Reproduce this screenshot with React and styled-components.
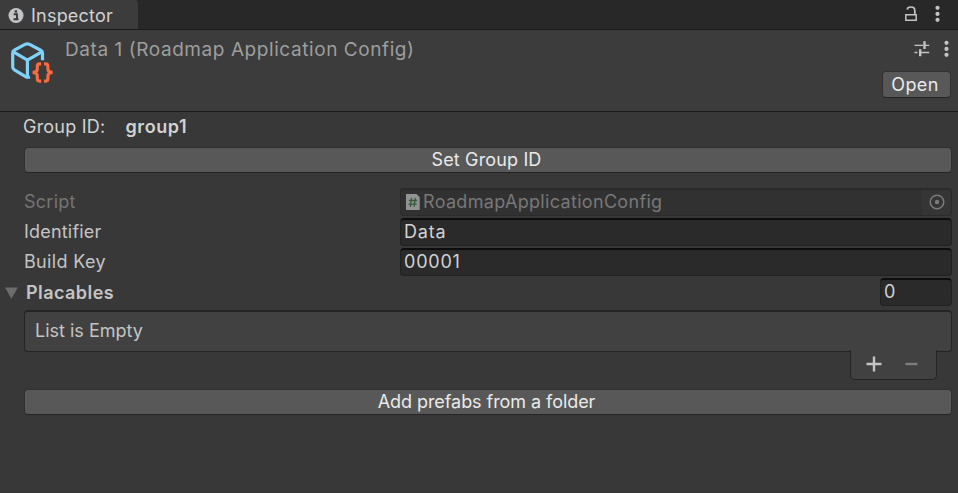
import React from "react";
import styled, { createGlobalStyle } from "styled-components";

const GlobalStyle = createGlobalStyle`
  * { box-sizing: border-box; }
  body { margin: 0; background: #383838; }
  button, input { font: inherit; margin: 0; }
`;

const Window = styled.div`
  width: 958px;
  height: 493px;
  overflow: hidden;
  display: flex;
  flex-direction: column;
  background: #383838;
  color: #c4c4c4;
  font: 400 18px/24px Inter, sans-serif;
  border-bottom: 1px solid #323232;
`;

const Text = styled.span`
  white-space: pre;
  letter-spacing: ${(p) => p.$track || 0}px;
  font-weight: ${(p) => (p.$bold ? 600 : 400)};
`;

const TabBar = styled.header`
  height: 30px;
  flex: none;
  display: flex;
  justify-content: space-between;
  background: #282828;
  border-bottom: 1px solid #1a1a1a;
`;

const Tab = styled.div`
  width: 138px;
  display: flex;
  align-items: center;
  gap: 7px;
  padding: 3px 0 0 8px;
  background: #3c3c3c;
  border-top-right-radius: 3px;
  color: #d2d2d2;
`;

const TabActions = styled.div`
  display: flex;
  align-items: flex-start;
  gap: 17px;
  padding: 5px 18px 0 0;
`;

const AssetHeader = styled.section`
  height: 82px;
  flex: none;
  display: flex;
  background: #3c3c3c;
  border-bottom: 1px solid #1a1a1a;
`;

const AssetIcon = styled.svg`
  flex: none;
  width: 46px;
  height: 46px;
  margin: 9px 0 0 9px;
`;

const AssetTitle = styled.div`
  flex: 1;
  padding: 8px 0 0 10px;
  color: #9e9e9e;
  font-size: 19px;
`;

const AssetTools = styled.div`
  display: flex;
  flex-direction: column;
  align-items: flex-end;
  padding-right: 7px;
`;

const AssetActions = styled.div`
  height: 41px;
  display: flex;
  gap: 14px;
  padding: 10px 2px 0 0;
`;

const Button = styled.button`
  width: ${(p) => (p.$small ? "69px" : "auto")};
  height: ${(p) => (p.$small ? "27px" : "26px")};
  margin-left: ${(p) => (p.$small ? 0 : "1px")};
  flex: none;
  display: flex;
  justify-content: center;
  align-items: center;
  padding: 0 3px 0 0;
  background: #585858;
  border: 1px solid #303030;
  border-bottom-color: #242424;
  border-radius: 4px;
  color: #eaeaea;
`;

const Body = styled.main`
  flex: 1;
  display: flex;
  flex-direction: column;
  padding: 3px 6px 0 23px;
`;

const GroupRow = styled.div`
  height: 32px;
  flex: none;
  display: flex;
  gap: 20px;
  color: #d2d2d2;
`;

const Fields = styled.div`
  display: grid;
  grid-template-columns: 377px 1fr;
  grid-auto-rows: 28px;
  row-gap: 2px;
  margin-top: 15px;
  align-items: center;
`;

const Label = styled.label`
  padding-left: 1px;
  color: ${(p) => (p.$disabled ? "#747474" : "#c4c4c4")};
`;

const Field = styled.div`
  width: ${(p) => p.$width || "auto"};
  height: 28px;
  flex: none;
  display: flex;
  align-items: center;
  padding: 0 0 1px 3px;
  background: #2a2a2a;
  border: 1px solid #212121;
  border-top: 2px solid #0d0d0d;
  border-radius: 4px;
  color: #d2d2d2;
`;

const ObjectField = styled(Field)`
  padding: 0 0 1px 5px;
  gap: 3px;
  background: #313131;
  border: 1px solid #2b2b2b;
  border-top: 2px solid #2b2b2b;
  color: #787878;
  overflow: hidden;
`;

const Picker = styled.span`
  width: 29px;
  height: 25px;
  margin-left: auto;
  display: flex;
  flex: none;
  align-items: center;
  justify-content: center;
  background: #353535;
`;

const ListHeader = styled.div`
  height: 28px;
  flex: none;
  display: flex;
  align-items: center;
  margin: 2px 0 0 -18px;
`;

const Foldout = styled.span`
  flex: 1;
  display: flex;
  align-items: center;
  gap: 8px;
  padding-top: 2px;
`;

const ListBox = styled.div`
  height: 42px;
  flex: none;
  display: flex;
  align-items: center;
  margin: 4px 0 0 1px;
  padding: 0 0 2px 10px;
  background: #414141;
  border: 1px solid #242424;
  border-top-width: 2px;
  border-radius: 4px;
`;

const ListFooter = styled.div`
  width: 87px;
  height: 30px;
  flex: none;
  align-self: flex-end;
  display: flex;
  justify-content: space-between;
  z-index: 1;
  margin: -2px 15px 9px 0;
  padding: 6px 18px 0 15px;
  background: #414141;
  border: 1px solid #242424;
  border-top: 0;
  border-radius: 0 0 5px 5px;
`;

const Icon = styled.svg`
  display: block;
  flex: none;
`;

const InfoIcon = () => (
  <Icon width="16" height="16" viewBox="0 0 16 16">
    <circle cx="8" cy="7.5" r="7.5" fill="#c4c4c4" />
    <path d="M5.7 6.3H9v4.8M5.5 11.3h5" stroke="#383838" strokeWidth="1.9" fill="none" />
    <path d="M6.7 2.3h2.4v2.3H6.7z" fill="#383838" />
  </Icon>
);

const LockIcon = () => (
  <Icon width="14" height="17" viewBox="0 0 14 17">
    <path d="M1.8 9.7h10.4v5.6H1.8z" stroke="#c4c4c4" strokeWidth="1.5" fill="none" />
    <path d="M3.3 4.6C3.3 2.8 4.9 2 7 2c2.7 0 3.8 1.3 3.8 3.5v4" stroke="#c4c4c4" strokeWidth="1.7" fill="none" />
  </Icon>
);

const DotsIcon = () => (
  <Icon width="5" height="18" viewBox="0 0 5 18">
    <circle cx="2.5" cy="2.8" r="2.1" fill="#c4c4c4" />
    <circle cx="2.5" cy="8.9" r="2.1" fill="#c4c4c4" />
    <circle cx="2.5" cy="14.8" r="2.1" fill="#c4c4c4" />
  </Icon>
);

const PresetIcon = () => (
  <Icon width="16" height="17" viewBox="0 0 16 17">
    <path d="M.5 5.4h8.7M11 5.4h4.2M.5 12.5h2.8M5.5 12.5h9.7" stroke="#c4c4c4" strokeWidth="1.4" />
    <path d="M10.5 1.3v7.6M6.2 9.2v7" stroke="#c4c4c4" strokeWidth="2.4" />
  </Icon>
);

const ConfigIcon = () => (
  <AssetIcon viewBox="0 0 46 46" fill="none">
    <g stroke="#7fd3fb" strokeWidth="3.2" strokeLinejoin="round">
      <path d="M33.5 21.3V14Q33.5 12.1 31.7 11.2L20.6 5.4Q18.3 4.4 16 5.4L5.3 11.2Q3.7 12.1 3.7 14v13.9Q3.7 29.8 5.4 30.8L16.2 37.3Q18.4 38.7 21 38" />
      <path d="M4.4 12.8 18.4 21.2 32.8 12.8M18.4 21.2V38" />
    </g>
    <g stroke="#fb6b3e" strokeWidth="3.1">
      <path d="M32.2 24.9h-1.6q-2.3 0-2.3 2.3v3.1q0 2.8-4.6 3.2 4.6.4 4.6 3.2v3.1q0 2.3 2.3 2.3h1.6" />
      <path d="M35 24.9h1.6q2.3 0 2.3 2.3v3.1q0 2.8 4.6 3.2-4.6.4-4.6 3.2v3.1q0 2.3-2.3 2.3H35" />
    </g>
  </AssetIcon>
);

const ScriptIcon = () => (
  <Icon width="14" height="16" viewBox="0 0 14 16">
    <path d="M0 0h10.5L13.7 3.2V16H0z" fill="#929292" />
    <path d="M5.6 3.8 4.4 12.8M9.3 3.8 8.1 12.8M2.9 6.5h8.2M2.5 10.1h8.2" stroke="#365b3a" strokeWidth="1.3" />
  </Icon>
);

const PickerIcon = () => (
  <Icon width="16" height="16" viewBox="0 0 16 16">
    <circle cx="8" cy="8" r="6.8" fill="none" stroke="#7b7b7b" strokeWidth="1.5" />
    <circle cx="8" cy="8" r="2.2" fill="#7b7b7b" />
  </Icon>
);

export default function App() {
  return (
    <>
      <GlobalStyle />
      <Window>
        <TabBar>
          <Tab>
            <InfoIcon />
            <Text $track={0.22}>Inspector</Text>
          </Tab>
          <TabActions>
            <LockIcon />
            <DotsIcon />
          </TabActions>
        </TabBar>
        <AssetHeader>
          <ConfigIcon />
          <AssetTitle>
            <Text $track={0.57}>Data 1 (Roadmap Application Config)</Text>
          </AssetTitle>
          <AssetTools>
            <AssetActions>
              <PresetIcon />
              <DotsIcon />
            </AssetActions>
            <Button $small>
              <Text $track={0.35}>Open</Text>
            </Button>
          </AssetTools>
        </AssetHeader>
        <Body>
          <GroupRow>
            <Text $track={0.22}>Group ID:</Text>
            <Text $bold $track={0.6}>group1</Text>
          </GroupRow>
          <Button>
            <Text $track={0.15}>Set Group ID</Text>
          </Button>
          <Fields>
            <Label $disabled>
              <Text $track={0.25}>Script</Text>
            </Label>
            <ObjectField>
              <ScriptIcon />
              <Text $track={0.32}>RoadmapApplicationConfig</Text>
              <Picker>
                <PickerIcon />
              </Picker>
            </ObjectField>
            <Label>
              <Text $track={0.2}>Identifier</Text>
            </Label>
            <Field>
              <Text $track={0.8}>Data</Text>
            </Field>
            <Label>
              <Text $track={0.34}>Build Key</Text>
            </Label>
            <Field>
              <Text $track={0.8}>00001</Text>
            </Field>
          </Fields>
          <ListHeader>
            <Foldout>
              <Icon width="13" height="13" viewBox="0 0 13 13">
                <path d="M0 .5h12.8L6.4 11.8z" fill="#6c6c6c" />
              </Icon>
              <Text $bold $track={0.44}>Placables</Text>
            </Foldout>
            <Field $width="72px">
              <Text>0</Text>
            </Field>
          </ListHeader>
          <ListBox>
            <Text>List is Empty</Text>
          </ListBox>
          <ListFooter>
            <Icon width="16" height="16" viewBox="0 0 16 16">
              <path d="M.5 8h15M8 .5v15" stroke="#c4c4c4" strokeWidth="2.4" />
            </Icon>
            <Icon width="13" height="16" viewBox="0 0 13 16">
              <path d="M.5 8h12" stroke="#7d7d7d" strokeWidth="2.4" />
            </Icon>
          </ListFooter>
          <Button>
            <Text $track={-0.06}>Add prefabs from a folder</Text>
          </Button>
        </Body>
      </Window>
    </>
  );
}
